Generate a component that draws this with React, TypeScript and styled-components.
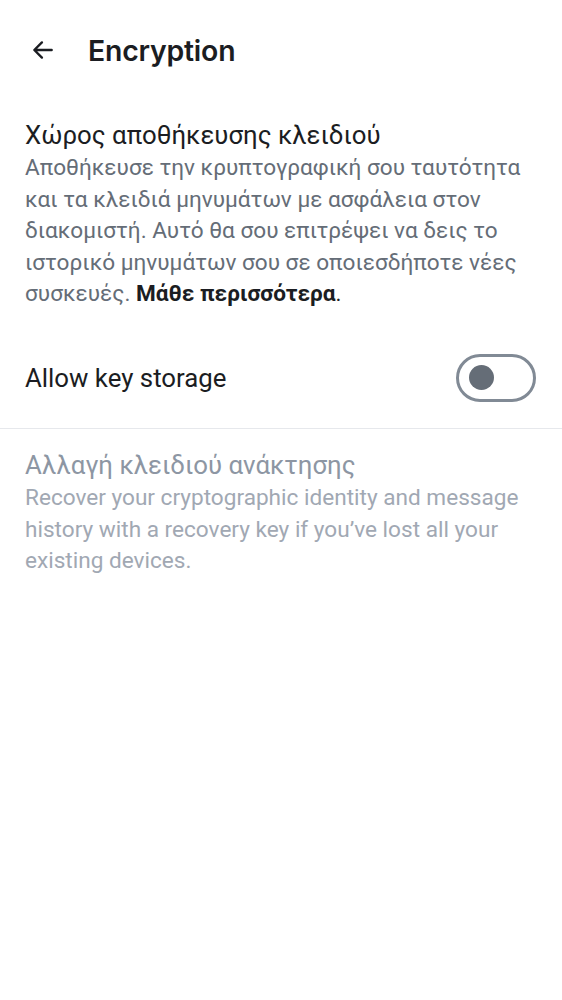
import React from "react";
import styled, { createGlobalStyle } from "styled-components";

const Global = createGlobalStyle`
  html, body { margin: 0; padding: 0; background: #ffffff; }
  body { font-family: Roboto, "Noto Sans", sans-serif; -webkit-font-smoothing: antialiased; }
`;

const Page = styled.div`
  width: 562px;
  min-height: 1000px;
  background: #ffffff;
  display: flex;
  flex-direction: column;
`;

const TopBar = styled.header`
  height: 100px;
  display: flex;
  align-items: center;
  padding: 0 0 0 30px;
  box-sizing: border-box;
`;

const BackButton = styled.button`
  width: 26px;
  height: 26px;
  padding: 0;
  border: none;
  background: none;
  display: flex;
  align-items: center;
  justify-content: center;
  color: #1b1d22;
  margin-right: 32px;
`;

const Title = styled.h1`
  margin: 0;
  font-family: Inter, Roboto, sans-serif;
  font-weight: 600;
  font-size: 28.4px;
  color: #1b1d22;
  letter-spacing: -0.2px;
`;

const Section = styled.section<{ $top: number }>`
  padding: 0 25px;
  margin-top: ${(p) => p.$top}px;
  display: flex;
  flex-direction: column;
`;

const Heading = styled.h2<{ $disabled?: boolean }>`
  margin: 0;
  font-weight: 400;
  font-size: 25.8px;
  line-height: 34px;
  color: ${(p) => (p.$disabled ? "#8d96a3" : "#1b1d22")};
`;

const Body = styled.p<{ $disabled?: boolean }>`
  margin: 0;
  font-size: 22.6px;
  line-height: 31.6px;
  color: ${(p) => (p.$disabled ? "#a1a8b3" : "#656d77")};
  strong { font-weight: 700; color: #1b1d22; }
  span { color: #1b1d22; }
`;

const Row = styled.div`
  display: flex;
  align-items: center;
  justify-content: space-between;
  padding: 0 26px 0 25px;
  height: 100px;
  margin-top: 18px;
  border-bottom: 1px solid #e6e8ec;
`;

const RowLabel = styled.span`
  font-size: 25.8px;
  color: #1b1d22;
`;

const Switch = styled.div`
  width: 80px;
  height: 48px;
  box-sizing: border-box;
  border: 3px solid #818a95;
  border-radius: 24px;
  display: flex;
  align-items: center;
  padding-left: 9.5px;
`;

const Thumb = styled.div`
  width: 25px;
  height: 25px;
  border-radius: 50%;
  background: #656d77;
`;

export default function App() {
  return (
    <Page>
      <Global />
      <TopBar>
        <BackButton aria-label="Back">
          <svg width="26" height="26" viewBox="0 0 24 24" fill="none">
            <path d="M20 12H4.5M11 5l-7 7 7 7" stroke="currentColor" strokeWidth="2.2" strokeLinecap="round" strokeLinejoin="round" />
          </svg>
        </BackButton>
        <Title>Encryption</Title>
      </TopBar>
      <Section $top={18}>
        <Heading>Χώρος αποθήκευσης κλειδιού</Heading>
        <Body>
          Αποθήκευσε την κρυπτογραφική σου ταυτότητα και τα κλειδιά μηνυμάτων με ασφάλεια στον διακομιστή. Αυτό θα σου επιτρέψει να δεις το ιστορικό μηνυμάτων σου σε οποιεσδήποτε νέες συσκευές. <strong>Μάθε περισσότερα</strong><span>.</span>
        </Body>
      </Section>
      <Row>
        <RowLabel>Allow key storage</RowLabel>
        <Switch role="switch" aria-checked="false">
          <Thumb />
        </Switch>
      </Row>
      <Section $top={19}>
        <Heading $disabled>Αλλαγή κλειδιού ανάκτησης</Heading>
        <Body $disabled>
          Recover your cryptographic identity and message history with a recovery key if you’ve lost all your existing devices.
        </Body>
      </Section>
    </Page>
  );
}
